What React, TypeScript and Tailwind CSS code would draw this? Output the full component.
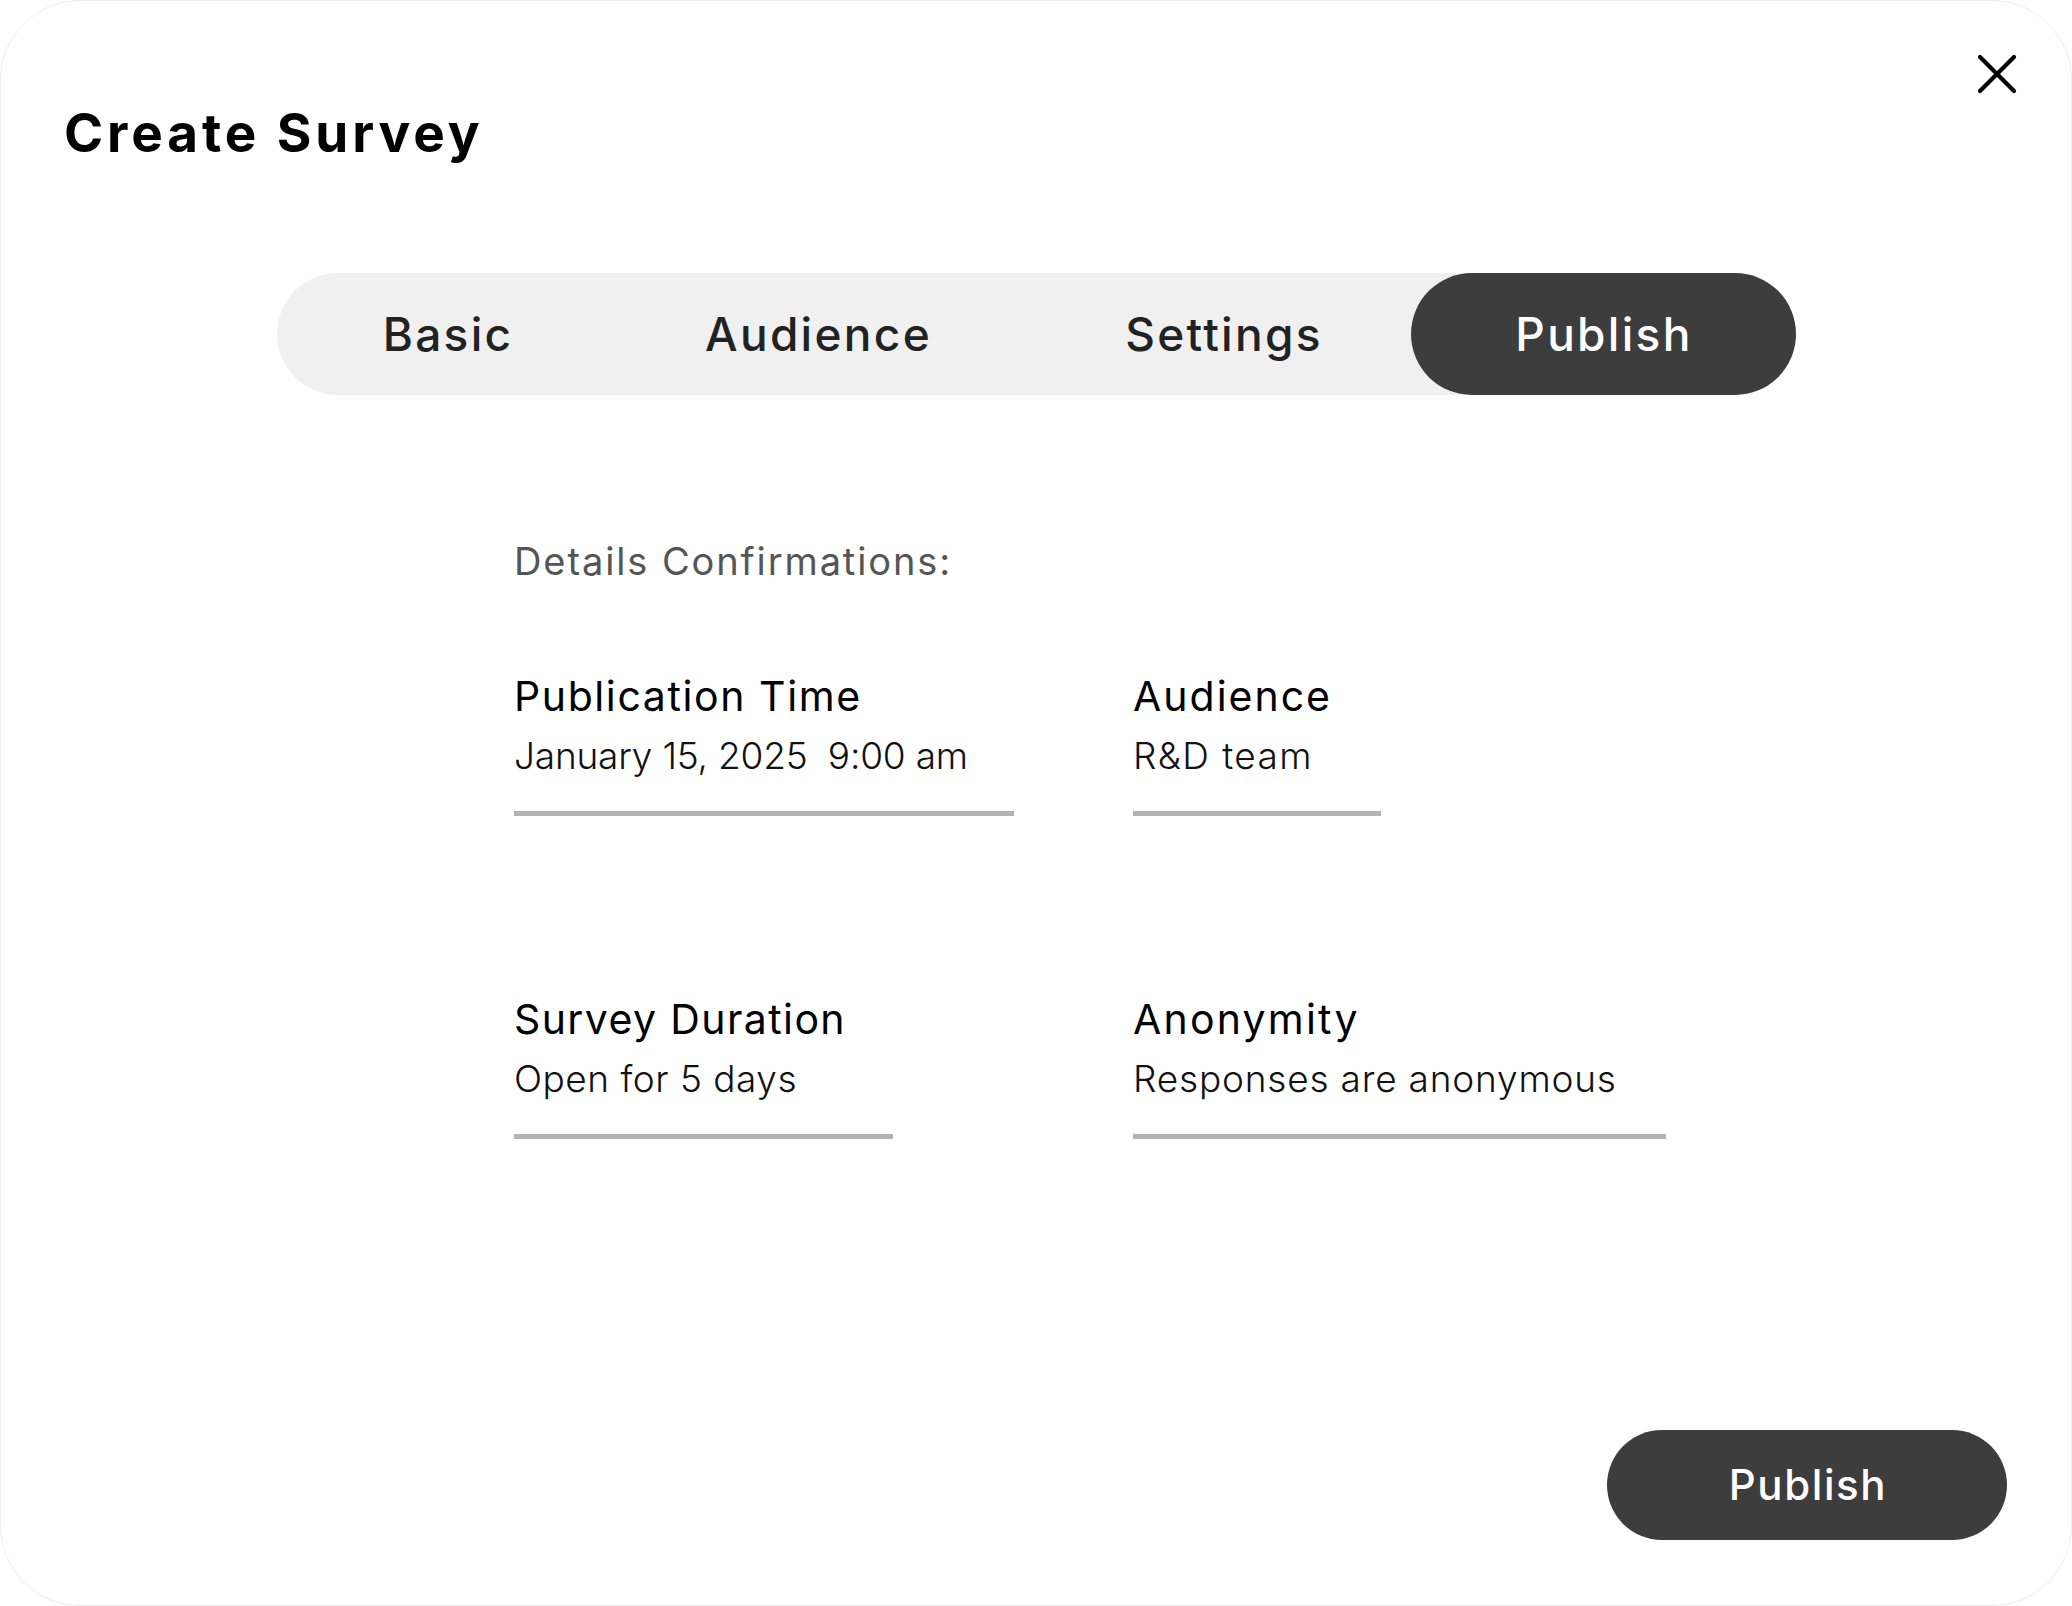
import React from "react";

function Item({
  title,
  value,
  line,
  tt,
  vt,
}: {
  title: string;
  value: string;
  line: string;
  tt: string;
  vt: string;
}) {
  return (
    <div className="flex flex-col">
      <div className={`text-[41px] leading-[41px] font-normal text-black whitespace-pre ${tt}`}>{title}</div>
      <div className={`mt-[20px] text-[37px] leading-[37px] font-light text-[#111] whitespace-pre ${vt}`}>{value}</div>
      <div className={`mt-[37px] h-[5px] bg-[#b3b3b3] ${line}`} />
    </div>
  );
}

export default function App() {
  return (
    <div className="w-[2072px] h-[1606px] bg-white rounded-[80px] border border-[#eeeeee] flex flex-col font-['Inter',sans-serif] overflow-hidden">
      <div className="flex justify-between items-start pl-[63px] pr-[54px]">
        <h1 className="mt-[106px] text-[53px] leading-[53px] font-bold text-black tracking-[3.9px]">Create Survey</h1>
        <button className="mt-[53px]" aria-label="Close">
          <svg width="40" height="40" viewBox="0 0 40 40" fill="none">
            <path d="M3 3 L37 37 M37 3 L3 37" stroke="#000" strokeWidth="4.2" strokeLinecap="round" />
          </svg>
        </button>
      </div>

      <div className="mt-[113px] mx-auto w-[1519px] h-[122px] rounded-full bg-[#f0f0f0] flex items-center text-[46px] leading-[46px] font-medium text-[#222] tracking-[2.3px]">
        <div className="w-[341px] pl-[2px] flex justify-center">Basic</div>
        <div className="w-[400px] pl-[2px] flex justify-center">Audience</div>
        <div className="w-[393px] pl-[20px] flex justify-center">Settings</div>
        <div className="w-[385px] pl-[2px] h-full rounded-full bg-[#3d3d3d] text-white flex items-center justify-center">Publish</div>
      </div>

      <div className="pl-[513px] mt-[147px]">
        <div className="text-[38px] leading-[38px] text-[#555555] tracking-[1.9px]">Details Confirmations:</div>
        <div className="mt-[96px] grid grid-cols-[619px_auto] gap-y-[183px]">
          <Item
            title="Publication Time"
            value="January 15, 2025  9:00 am"
            line="w-[500px]"
            tt="tracking-[1.6px]"
            vt="tracking-[-0.2px]"
          />
          <Item title="Audience" value="R&D team" line="w-[248px]" tt="tracking-[2px]" vt="tracking-[1.4px]" />
          <Item
            title="Survey Duration"
            value="Open for 5 days"
            line="w-[379px]"
            tt="tracking-[1.4px]"
            vt="tracking-[0.5px]"
          />
          <Item
            title="Anonymity"
            value="Responses are anonymous"
            line="w-[533px]"
            tt="tracking-[2.2px]"
            vt="tracking-[0.8px]"
          />
        </div>
      </div>

      <div className="mt-auto flex justify-end pr-[64px] pb-[65px]">
        <button className="w-[400px] h-[110px] pl-[2px] rounded-full bg-[#3d3d3d] text-white text-[42px] leading-[42px] font-medium tracking-[1.6px] flex items-center justify-center">
          Publish
        </button>
      </div>
    </div>
  );
}
